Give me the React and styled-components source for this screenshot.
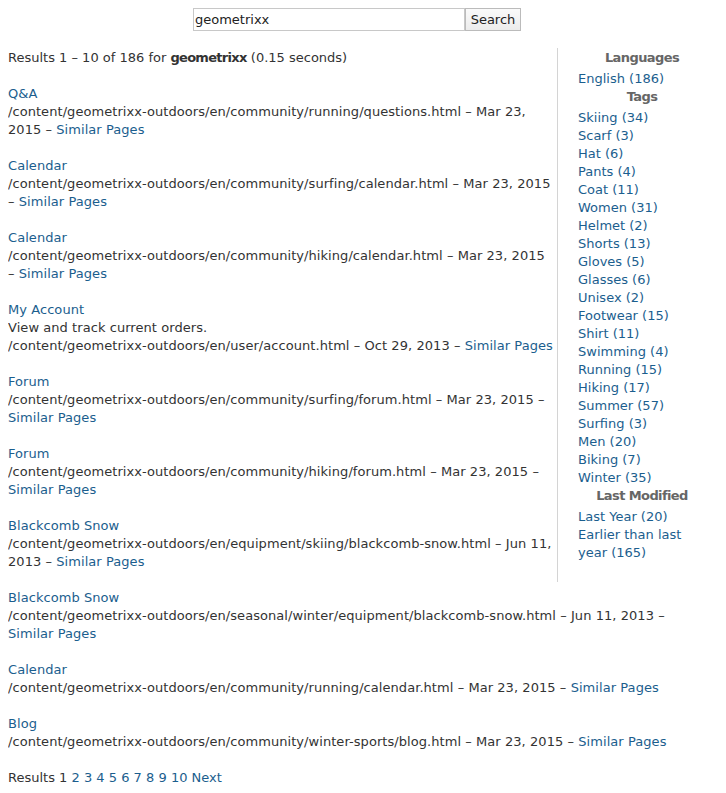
import React from "react";
import styled, { createGlobalStyle } from "styled-components";

const Global = createGlobalStyle`
  body {
    margin: 8px;
    background: #fff;
    font-family: "DejaVu Sans", "Liberation Sans", sans-serif;
    font-size: 13px;
    line-height: 18px;
    color: #333;
  }
  a { color: #1b5e8e; text-decoration: none; }
`;

const SearchForm = styled.form`
  display: flex;
  justify-content: center;
  margin: 0 12px 0 0;
`;

const SearchInput = styled.input`
  width: 272px;
  height: 23px;
  box-sizing: border-box;
  padding: 1px 1px;
  border: 1px solid #c8c8c8;
  font-family: inherit;
  font-size: 13px;
  color: #222;
  outline: none;
  margin: 0;
`;

const SearchButton = styled.button`
  height: 23px;
  width: 56px;
  box-sizing: border-box;
  border: 1px solid #bbb;
  background: linear-gradient(#fafafa, #ececec);
  font-family: inherit;
  font-size: 13px;
  color: #222;
  padding: 0 4px;
  margin: 0;
`;

const Body = styled.div`
  margin-top: 17px;
`;

const Sidebar = styled.aside`
  float: right;
  width: 128px;
  margin: 0 0 0 4px;
  padding: 1px 12px 20px 20px;
  border-left: 1px solid #d4d4d4;
`;

const FacetTitle = styled.div`
  text-align: center;
  font-weight: bold;
  letter-spacing: -0.6px;
  color: #666;
  margin-bottom: 3px;
`;

const FacetList = styled.ul`
  list-style: none;
  margin: 0;
  padding: 0;
`;

const Summary = styled.p`
  margin: 0 0 18px;
  padding-top: 1px;
`;

const Query = styled.b`
  letter-spacing: -0.7px;
`;

const Result = styled.div`
  margin-bottom: 18px;
  letter-spacing: 0.06px;
`;

const Title = styled.a`
  display: block;
`;

const Similar = styled.a`
  white-space: nowrap;
`;

const Pager = styled.div`
  clear: both;
`;

const results = [
  { t: "Q&A", p: "/content/geometrixx-outdoors/en/community/running/questions.html", d: "Mar 23, 2015" },
  { t: "Calendar", p: "/content/geometrixx-outdoors/en/community/surfing/calendar.html", d: "Mar 23, 2015" },
  { t: "Calendar", p: "/content/geometrixx-outdoors/en/community/hiking/calendar.html", d: "Mar 23, 2015" },
  { t: "My Account", e: "View and track current orders.", p: "/content/geometrixx-outdoors/en/user/account.html", d: "Oct 29, 2013" },
  { t: "Forum", p: "/content/geometrixx-outdoors/en/community/surfing/forum.html", d: "Mar 23, 2015" },
  { t: "Forum", p: "/content/geometrixx-outdoors/en/community/hiking/forum.html", d: "Mar 23, 2015" },
  { t: "Blackcomb Snow", p: "/content/geometrixx-outdoors/en/equipment/skiing/blackcomb-snow.html", d: "Jun 11, 2013" },
  { t: "Blackcomb Snow", p: "/content/geometrixx-outdoors/en/seasonal/winter/equipment/blackcomb-snow.html", d: "Jun 11, 2013" },
  { t: "Calendar", p: "/content/geometrixx-outdoors/en/community/running/calendar.html", d: "Mar 23, 2015" },
  { t: "Blog", p: "/content/geometrixx-outdoors/en/community/winter-sports/blog.html", d: "Mar 23, 2015" },
];

const tags = [
  "Skiing (34)", "Scarf (3)", "Hat (6)", "Pants (4)", "Coat (11)", "Women (31)", "Helmet (2)",
  "Shorts (13)", "Gloves (5)", "Glasses (6)", "Unisex (2)", "Footwear (15)", "Shirt (11)",
  "Swimming (4)", "Running (15)", "Hiking (17)", "Summer (57)", "Surfing (3)", "Men (20)",
  "Biking (7)", "Winter (35)",
];

const Facet = ({ title, items }) => (
  <>
    <FacetTitle>{title}</FacetTitle>
    <FacetList>
      {items.map((i, k) => (
        <li key={k}><a href="#">{i}</a></li>
      ))}
    </FacetList>
  </>
);

export default function App() {
  return (
    <>
      <Global />
      <SearchForm onSubmit={(e) => e.preventDefault()}>
        <SearchInput defaultValue="geometrixx" />
        <SearchButton type="submit">Search</SearchButton>
      </SearchForm>
      <Body>
        <Sidebar>
          <Facet title="Languages" items={["English (186)"]} />
          <Facet title="Tags" items={tags} />
          <Facet title="Last Modified" items={["Last Year (20)", "Earlier than last year (165)"]} />
        </Sidebar>
        <Summary>
          Results 1 – 10 of 186 for <Query>geometrixx</Query> (0.15 seconds)
        </Summary>
        {results.map((r, i) => (
          <Result key={i}>
            <Title href="#">{r.t}</Title>
            {r.e && <div>{r.e}</div>}
            {r.p} – {r.d} – <Similar href="#">Similar Pages</Similar>
          </Result>
        ))}
        <Pager>
          Results 1{" "}
          {[2, 3, 4, 5, 6, 7, 8, 9, 10].map((n) => (
            <React.Fragment key={n}>
              <a href="#">{n}</a>{" "}
            </React.Fragment>
          ))}
          <a href="#">Next</a>
        </Pager>
      </Body>
    </>
  );
}
